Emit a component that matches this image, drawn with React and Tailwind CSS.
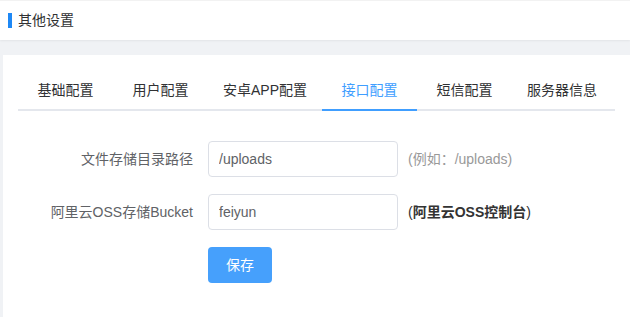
import React, { useState } from 'react';

const tabs = ['基础配置', '用户配置', '安卓APP配置', '接口配置', '短信配置', '服务器信息'];

function FormRow({ label, children }) {
  return (
    <div className="flex items-center">
      <label className="w-[190px] shrink-0 pr-[15px] text-right text-[14px] text-[#606266]">{label}</label>
      {children}
    </div>
  );
}

export default function App() {
  const [active, setActive] = useState(3);

  return (
    <div
      className="w-[630px] h-[317px] overflow-hidden bg-[#f0f2f5] text-[14px]"
      style={{ fontFamily: '"Liberation Sans", "Noto Sans CJK SC", sans-serif' }}
    >
      <div className="h-[40px] bg-white border-t border-[#f2f2f2] flex items-center pl-2 shadow-[0_1px_2px_rgba(0,0,0,0.06)]">
        <span className="w-[4px] h-[15px] bg-[#1e88f5]" />
        <span className="ml-[6px] text-[14px] text-[#303133]">其他设置</span>
      </div>

      <div className="mt-[15px] ml-[3px] h-[262px] bg-white p-[15px]">
        <div className="flex border-b-2 border-[#e4e7ed]">
          {tabs.map((t, i) => (
            <button
              key={t}
              onClick={() => setActive(i)}
              className={`-mb-[2px] h-[41px] min-w-[95px] px-[15px] pt-[1px] text-center text-[14px] border-b-2 ${
                i === active ? 'text-[#409eff] border-[#409eff]' : 'text-[#303133] border-transparent'
              }`}
            >
              {t}
            </button>
          ))}
        </div>

        <div className="mt-[30px] flex flex-col gap-[17px]">
          <FormRow label="文件存储目录路径">
            <input
              defaultValue="/uploads"
              className="w-[190px] h-[36px] rounded-[4px] border border-[#dcdfe6] px-[10px] text-[14px] text-[#606266] outline-none"
            />
            <span className="ml-[10px] text-[14px] text-[#999999]">(例如：/uploads)</span>
          </FormRow>
          <FormRow label="阿里云OSS存储Bucket">
            <input
              defaultValue="feiyun"
              className="w-[190px] h-[36px] rounded-[4px] border border-[#dcdfe6] px-[10px] text-[14px] text-[#606266] outline-none"
            />
            <span className="ml-[10px] text-[14px] text-[#333333]">
              (<b className="font-bold">阿里云OSS控制台</b>)
            </span>
          </FormRow>
          <div className="pl-[190px]">
            <button className="w-[64px] h-[36px] rounded-[4px] bg-[#46a0fc] text-white text-[14px]">保存</button>
          </div>
        </div>
      </div>
    </div>
  );
}
